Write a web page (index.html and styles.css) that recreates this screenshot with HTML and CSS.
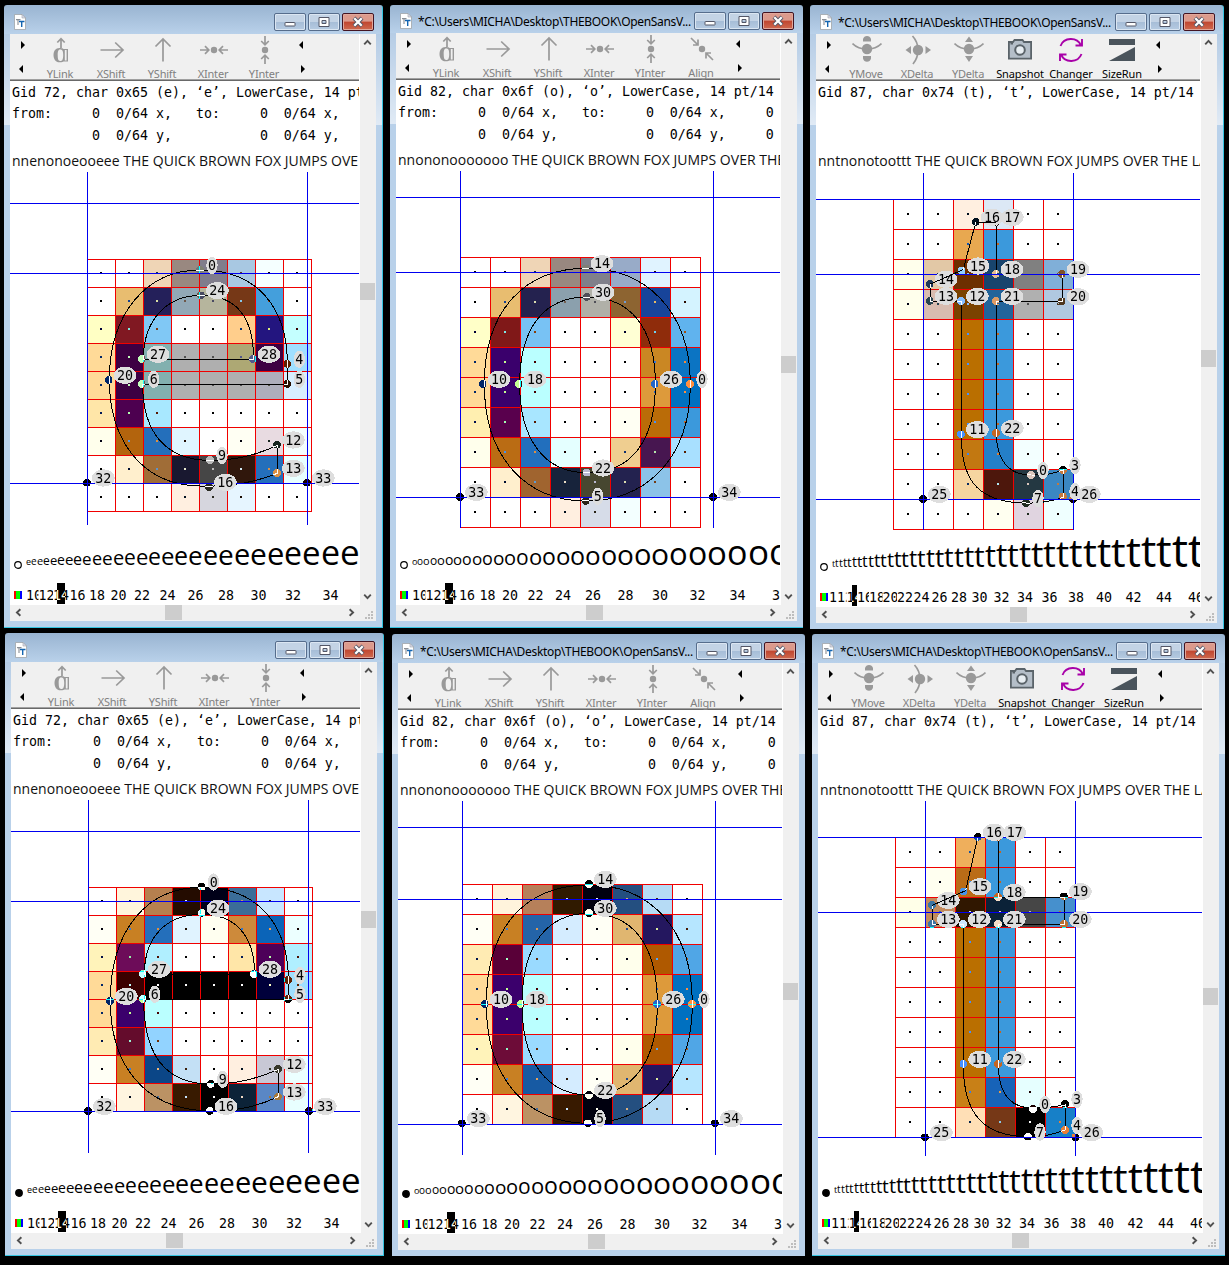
FILE: index.html
```html
<!DOCTYPE html>
<html lang="en">
<head>
<meta charset="utf-8">
<title>Glyph hinting windows</title>
<link rel="stylesheet" href="styles.css">
</head>
<body>
<svg class="defs" aria-hidden="true">
  <defs>
    <symbol id="i-ylink" viewBox="-15 -16 30 32">
      <path class="ln" d="M0-11.500V-2M-3.700-7.500L0-11.300L3.700-7.500"/>
      <path class="fl" fill-rule="evenodd" d="M-1.500-2C2-2 2.500-1 2.500-1H7V11.500H2.500C1 12.300-.5 12.300-1.500 12.300C-5.500 12.300-7.500 9-7.500 5S-5.500-2-1.500-2ZM-.8-.6C-3-.6-3.300 2-3.300 5S-3 11-.8 11C1 11 2.200 10 2.200 5S1 -.6-.8-.6ZM3.800 0V10.500H5.600V0Z"/>
    </symbol>
    <symbol id="i-xshift" viewBox="-15 -16 30 32"><path class="ln" d="M-11.500 0H11M3.200-7.500L11 0L3.200 7.500"/></symbol>
    <symbol id="i-yshift" viewBox="-15 -16 30 32"><path class="ln" d="M0 11.500V-11M-7.500-3.500L0-11L7.500-3.500"/></symbol>
    <symbol id="i-xinter" viewBox="-15 -16 30 32">
      <circle class="fl" r="3.200"/><path class="ln" d="M-14 0H-5.500M-9-3.800L-5.200 0L-9 3.800M14 0H5.500M9-3.800L5.200 0L9 3.800"/>
    </symbol>
    <symbol id="i-yinter" viewBox="-15 -16 30 32">
      <circle class="fl" r="3.200"/><path class="ln" d="M0-14V-5.500M-3.800-9L0-5.200L3.800-9M0 14V5.500M-3.800 9L0 5.200L3.800 9"/>
    </symbol>
    <symbol id="i-align" viewBox="-15 -16 30 32">
      <circle class="fl" r="3.200"/><path class="ln" d="M-11-11L-4-4M-9-4H-4V-9.500M11 11L4 4M9 4H4V9.500"/>
    </symbol>
    <symbol id="i-ymove" viewBox="-15 -16 30 32">
      <circle class="fl" cx="0" cy="-1" r="5.200"/><path class="ln" d="M-14.500-6.500Q-9-1 0-1Q9-1 14.500-6.500"/>
      <path class="fl" d="M-4-8.500V-11Q-3-14 0-14T4-11V-8.500ZM-4 6V8.500Q-3 11.800 0 11.800T4 8.500V6Z"/>
    </symbol>
    <symbol id="i-xdelta" viewBox="-15 -16 30 32">
      <circle class="fl" cx="0" cy="0" r="5.200"/><path class="ln" d="M-5.500-14Q0-8 0 0Q0 8-5 14"/>
      <path class="fl" d="M-7-4V4L-12.500 0ZM7.500-4V4L13 0Z"/>
    </symbol>
    <symbol id="i-ydelta" viewBox="-15 -16 30 32">
      <circle class="fl" cx="0" cy="-1" r="5.200"/><path class="ln" d="M-14.500-6.500Q-9-1 0-1Q9-1 14.500-6.500"/>
      <path class="fl" d="M-4-8L0-13.500L4-8ZM-4 6L0 12L4 6Z"/>
    </symbol>
    <symbol id="i-snapshot" viewBox="-15 -16 30 32">
      <path fill="#b4bec8" stroke="#5a6369" stroke-width="1.800" d="M-11.100-8H-7L-5.500-10H2.500L4-8H11.100V8.600H-11.100Z"/>
      <circle fill="#e8eef2" stroke="#5a6369" stroke-width="2" r="4.800"/><rect x="-9.500" y="-7" width="2.500" height="1.500" fill="#5a6369"/>
    </symbol>
    <symbol id="i-changer" viewBox="-15 -16 30 32">
      <path fill="none" stroke="#a800a8" stroke-width="1.900" d="M-10.500-4A11 10.500 0 0 1 10-4.500M4.500-4.500H11V-11M10.500 4A11 10.500 0 0 1-10 4.500M-4.500 4.500H-11V11"/>
    </symbol>
    <symbol id="i-sizerun" viewBox="-15 -16 30 32"><path fill="#4a545c" d="M-13-11H13V-5H-13ZM-13 11L13-3V11Z"/></symbol>
    <symbol id="i-doc" viewBox="0 0 12 16">
      <path fill="#fff" stroke="#a0a4a8" stroke-width=".8" d="M.5.500H8L11.500 4V15.500H.5Z"/><path fill="#dde" stroke="#a0a4a8" stroke-width=".6" d="M8 .5V4H11.500Z"/>
      <path fill="none" stroke="#8a8f96" stroke-width="1.100" d="M2 5.600H6.500M4 5.500V11"/><path fill="none" stroke="#1465b0" stroke-width="1.400" d="M5 7.500H10.500M7.700 7V13"/>
    </symbol>
    <symbol id="i-chevron" viewBox="-8 -8 16 16"><path fill="none" stroke="#505050" stroke-width="2" d="M-3.500 2L0-1.700L3.500 2"/></symbol>
  </defs>
</svg>
<main id="desktop" class="desktop"></main>
<script src="app.js"></script>
</body>
</html>
```
FILE: styles.css
```css
* { box-sizing: border-box; }
body { margin: 0; background: #000; overflow: hidden; }
.defs { position: absolute; width: 0; height: 0; }
.desktop { position: relative; width: 1229px; height: 1265px; background: #000; overflow: hidden; }

/* window frames */
.win {
  --title: 29px;
  position: absolute;
  display: flex;
  flex-direction: column;
  padding: 0 6px;
  border-radius: 3px 3px 0 0;
  background:
    linear-gradient(#99b4d1, #b9d1ea) 0 0 / 100% var(--title) no-repeat,
    linear-gradient(#b5cce5, #e0eaf5) 0 var(--title) / 100% 91px no-repeat,
    #b9d1ea;
}
.edge-right { box-shadow: inset -1px 0 #35c4e0; }
.edge-bottom { box-shadow: inset 0 -1px #35c4e0; }
.edge-right.edge-bottom { box-shadow: inset -1px -1px #35c4e0; }
.e-top { left: 4px; top: 5px; width: 379px; height: 623px; padding: 0 7px 7px 6px; }
.o-top { left: 390px; top: 5px; width: 413px; height: 623px; padding-bottom: 7px; --title: 28px; }
.t-top { left: 810px; top: 5px; width: 414px; height: 624px; padding: 0 7px 6px 6px; }
.e-bottom { left: 5px; top: 633px; width: 379px; height: 623px; padding: 0 7px 7px 6px; }
.o-bottom { left: 392px; top: 634px; width: 413px; height: 622px; padding-bottom: 6px; }
.t-bottom { left: 812px; top: 634px; width: 413px; height: 622px; padding-bottom: 7px; }

.titlebar { flex: none; display: flex; align-items: flex-end; height: var(--title); padding: 0 3px 3px 4px; }
.e-top .titlebar, .e-bottom .titlebar, .t-top .titlebar { padding-right: 2px; }
.titlebar .doc { flex: none; width: 12px; height: 16px; margin-bottom: 1px; }
.caption {
  flex: 1; min-width: 0; height: 18px; margin-left: 6px; padding-top: 1px; overflow: hidden; white-space: pre;
  font: 12px/17px "Noto Sans", "Open Sans", sans-serif; letter-spacing: -.33px; color: #000;
}
.buttons { display: flex; gap: 2px; }
.btn {
  width: 32px; height: 18px; display: flex; align-items: center; justify-content: center;
  border: 1px solid #566d8c; border-radius: 2px; box-shadow: inset 0 0 0 1px #dbe6f2;
  background: linear-gradient(#c3d3e5 50%, #a6bdd7 50%, #b6cbe2);
}
.btn.close { border-color: #431422; box-shadow: inset 0 0 0 1px #e0a89c; background: linear-gradient(#dc9a8c 45%, #c04630 50%, #cf6a50); }
.btn svg { width: 14px; height: 12px; }

.client { flex: 1; min-height: 0; display: flex; flex-direction: column; background: #fff; }
.upper { flex: 1; min-height: 0; display: flex; }
.pane { flex: 1; min-width: 0; margin-right: 1px; display: flex; flex-direction: column; overflow: hidden; }

/* toolbar */
.toolbar { flex: none; display: flex; height: 47px; background: #f0f0f0; border-bottom: 1px solid #696969; box-shadow: inset 0 -1px #a0a0a0; }
.tool { flex: none; width: 51px; display: flex; flex-direction: column; align-items: center; color: #808080; }
.tool svg { width: 30px; height: 32px; }
.tool span { font: 11px/14px "Noto Sans", "Open Sans", sans-serif; letter-spacing: -.2px; white-space: nowrap; position: relative; left: -.5px; top: .5px; }
.tool.on { color: #000; }
.tool.on span { left: .5px; letter-spacing: -.1px; }
.ln { fill: none; stroke: #999; stroke-width: 1.700; }
.fl { fill: #999; }
.pager { flex: none; width: 25px; display: flex; flex-direction: column; gap: 16px; padding: 7px 0 0 9px; }
.pager svg { width: 8px; height: 8px; }

/* text lines */
.info { margin: 0; height: 65px; padding: .5px 0 0 2px; font: 13.290px/21.500px "DejaVu Sans Mono", monospace; color: #000; }
.sample { height: 25px; padding: 4px 0 0 2px; font: 14px/21px "Open Sans", sans-serif; letter-spacing: .02px; white-space: nowrap; color: #111; }

/* glyph grid */
.plot { flex: 1; min-height: 0; width: 100%; display: block; isolation: isolate; shape-rendering: crispEdges; }
.plot .paper { fill: #fff; }
.plot .grid { stroke: #f00000; stroke-width: 3; fill: none; }
.plot .guide { stroke: #0000f0; stroke-width: 3; fill: none; }
.plot .outline { stroke: #000; stroke-width: 3; fill: none; }
.plot .invert { fill: #fff; mix-blend-mode: difference; }
.plot .tag { fill: #dedede; }
.plot text { font: 40px "DejaVu Sans Mono", monospace; text-anchor: middle; fill: #000; }

/* size run */
.run { flex: none; height: 76px; width: 100%; display: block; }
.run .glyph { font-family: "Open Sans", sans-serif; }
.run .num { font: 13.290px "DejaVu Sans Mono", monospace; text-anchor: middle; }
.run .marker { fill: #fff; stroke: #000; stroke-width: 1.200; }
.run .marker.full { fill: #000; }

/* scroll bars */
.vscroll { flex: none; width: 16px; background: #f0f0f0; display: flex; flex-direction: column; }
.hscroll { flex: none; height: 16px; background: #f0f0f0; display: flex; }
.track { flex: 1; }
.thumb { width: 15px; height: 17px; background: #cdcdcd; }
.hscroll .thumb { width: 17px; height: 15px; }
.chev { flex: none; width: 15px; height: 17px; }
.chev.down { transform: rotate(180deg); }
.hscroll .chev { width: 17px; height: 15px; }
.chev.left { transform: rotate(-90deg); }
.chev.right { transform: rotate(90deg); }
.grip { width: 16px; height: 16px; fill: #bdbdbd; }
```
FILE: app.js
```js
// Plot coordinates are in thirds of a pixel.
const TOOLS_LINK = [['ylink', 'YLink'], ['xshift', 'XShift'], ['yshift', 'YShift'], ['xinter', 'XInter'], ['yinter', 'YInter']];
const TOOLS_ALIGN = [...TOOLS_LINK, ['align', 'Align']];
const TOOLS_DELTA = [['ymove', 'YMove'], ['xdelta', 'XDelta'], ['ydelta', 'YDelta'], ['snapshot', 'Snapshot', 1], ['changer', 'Changer', 1], ['sizerun', 'SizeRun', 1]];
const PATH = '*C:\\Users\\MICHA\\Desktop\\THEBOOK\\OpenSansV...';
const COORDS = 'from:     0  0/64 x,   to:     0  0/64 x,     0\n          0  0/64 y,           0  0/64 y,     0';
const STEM = '- - ba6f00 3b99dc - -';

const windows = [
  {
    cls: 'e-top edge-right edge-bottom', tools: TOOLS_LINK, title: '', v: 232, h: 138,
    gid: 'Gid 72, char 0x65 (e), ‘e’, LowerCase, 14 pt/14', coords: COORDS,
    sample: 'nnenonoeooeee THE QUICK BROWN FOX JUMPS OVE', glyph: 'e', adv: .561,
    box: [30, -27, 1047, 1074], grid: [262.5, 238.5, 84], vx: [262.5, 922.5], vy: [-24, 1035], hy: [70.5, 280.5, 910.5],
    cells: `- - efd5b6 998880 807d8c a8c8e2 f5ffff -
      - e8bd70 24205a 92a8b6 b6b59d 763817 449fdc -
      ffffc4 801822 80c8f5 - - ffce8c 23157f c4ffff
      ffda98 3d0043 82b0af afafaf afafaf ada874 3d0043 a0dfff
      ffda98 3d0043 82b0af afafaf afafaf afafaf aeaebb d8efff
      ffe6a8 4d0050 a8e8ff - - - - -
      ffffec b3640d 246fbb e0f5ff - fffff3 e8dbe1 f5ffff
      - ffefcd a06d37 191830 464646 30170c 246fbb e8ffff
      - - - ffefe0 d6d6de e6f5ff - -`,
    path: 'M600 270C440 270 328 400 328 600C328 760 410 915 600 918C700 922 770 905 832 880V796C770 825 700 842 630 841C500 841 428 760 428 613H862V552C862 380 770 270 600 270ZM761 538C761 400 700 346 603 346C500 346 430 420 430 538Z',
    pts: [[0, 600, 270], [24, 603, 346], [27, 425, 537], [28, 758, 537], [4, 862, 552], [5, 862, 612], [20, 326, 600], [6, 425, 612], [12, 831, 794], [13, 831, 879], [9, 630, 840], [16, 627, 921], [32, 261, 908], [33, 921, 908]]
  },
  {
    cls: 'o-top edge-bottom', tools: TOOLS_ALIGN, title: PATH, v: 306, h: 173,
    gid: 'Gid 82, char 0x6f (o), ‘o’, LowerCase, 14 pt/14', coords: COORDS,
    sample: 'nnononooooooo THE QUICK BROWN FOX JUMPS OVER THE', glyph: 'o', adv: .603,
    box: [33, -30, 1152, 1077], grid: [226.5, 232.5, 90], vx: [226.5, 985.5], vy: [-27, 1044], hy: [52.5, 277.5, 952.5],
    cells: `- - efd5b6 998880 80808a 98abc8 e0f3ff -
      - e8bd70 24224f 8ba0ad b0b0a8 8d6431 17449a d4f3ff
      ffffc8 801818 78c2f4 - - ffffd4 8f2c0b 60b3ee
      ffda98 3a006c baffff - - - ca8723 0b74c3
      ffda98 3a006c baffff - - - dd9a3b 0070c0
      ffefb0 59004d a8e6ff - - fffff3 ba6c08 3b99dc
      ffffec ba6c14 226fbd e4ffff - efce90 471650 a8e0ff
      - ffefcd a0642f 17233b 474730 23224f 8cc3e8 -
      - - - ffefe0 d6dce8 f3ffff - -`,
    path: 'M603 265C425 265 298 385 298 612C298 840 430 963 602 963C770 963 916 850 916 612C916 390 780 265 603 265ZM605 351C480 351 404 440 404 612C404 780 480 878 605 878C735 878 811 790 811 612C811 440 735 351 605 351Z',
    pts: [[14, 602, 265], [30, 605, 351], [10, 293, 612], [18, 401, 612], [26, 809, 612], [0, 915, 612], [22, 605, 878], [5, 602, 963], [33, 225, 951], [34, 984, 951]]
  },
  {
    cls: 't-top edge-right', tools: TOOLS_DELTA, title: PATH, v: 299, h: 177,
    gid: 'Gid 87, char 0x74 (t), ‘t’, LowerCase, 14 pt/14', coords: '',
    sample: 'nntnonotoottt THE QUICK BROWN FOX JUMPS OVER THE LA', glyph: 't', adv: .3555,
    box: [33, -27, 1152, 1080], grid: [265.5, 58.5, 90], vx: [355.5, 805.5], vy: [-21, 1050], hy: [58.5, 283.5, 958.5],
    cells: `- - ffefe0 dce8f5 - -
      - - e8a850 3b99dc - -
      ffffec e2c8a6 6d2f00 18446d 808080 80afd8
      ffffec d8bcb0 7a4200 22649a b0b0b0 b0c8e0
      ${STEM}
      ${STEM}
      ${STEM}
      ${STEM}
      - - c27811 247fc8 f3ffff -
      - - f6d5a0 4d170c 243842 3b87c2
      - - - fffff0 e0d4e0 efffff`,
    path: 'M512 127L475 268Q440 285 376 312V364H469V763C469 880 500 968 663 969C710 971 745 962 775 952V870C740 882 720 886 678 885C610 885 574 840 574 759V364H772V283H574V127Z',
    over: 'M475 268Q440 285 376 312M512 127H574',
    pts: [[16, 512, 126], [17, 573, 126], [15, 470, 272], [18, 572, 282], [14, 374, 312], [13, 374, 363], [12, 468, 363], [21, 572, 363], [20, 770, 364], [19, 770, 282], [11, 468, 763], [22, 573, 759], [0, 678, 885], [3, 774, 870], [4, 774, 949], [7, 663, 969], [25, 354, 957], [26, 804, 957]]
  },
  {
    cls: 'e-bottom edge-right edge-bottom', tools: TOOLS_LINK, title: '', v: 232, h: 138, full: true,
    gid: 'Gid 72, char 0x65 (e), ‘e’, LowerCase, 14 pt/14', coords: COORDS,
    sample: 'nnenonoeooeee THE QUICK BROWN FOX JUMPS OVE', glyph: 'e', adv: .561,
    box: [33, 57, 1047, 1074], grid: [265.5, 322.5, 84], vx: [265.5, 925.5], vy: [60, 1119], hy: [154.5, 364.5, 994.5],
    cells: `- fff5dc b6804f 240c00 000018 3b6d98 c8e6ff -
      fffff5 c88023 246fbb e0f3ff fffff0 cd8a3b 0b64b8 ecffff
      fff3ba 6d0c59 b0efff - - ffe6a8 4d0059 b0efff
      ffda98 3b0000 000000 000000 000000 000000 00003b a0dfff
      ffda98 3b006c baffff - - - - -
      ffebb3 640c2c 92d3ff - - - - -
      fffff5 c88023 0b4687 c3e0f5 - ffefe0 c8c8d5 ecffff
      - fff5e0 bb9264 381a00 000000 0c2338 5a87c5 e8ffff`,
    path: 'M605 322C440 322 331 450 331 663C331 840 420 990 629 993C720 992 770 980 835 950V868C770 897 700 913 632 912C500 912 431 830 431 658H865V600C865 430 770 322 605 322ZM764 583C764 460 700 403 605 403C500 403 433 470 433 583Z',
    pts: [[0, 605, 320], [24, 605, 399], [27, 428, 582], [28, 761, 582], [4, 864, 600], [5, 864, 657], [20, 330, 663], [6, 428, 657], [12, 834, 867], [13, 834, 950], [9, 632, 912], [16, 629, 993], [32, 264, 993], [33, 927, 993]]
  },
  {
    cls: 'o-bottom', tools: TOOLS_ALIGN, title: PATH, v: 303, h: 173, full: true,
    gid: 'Gid 82, char 0x6f (o), ‘o’, LowerCase, 14 pt/14', coords: COORDS,
    sample: 'nnononooooooo THE QUICK BROWN FOX JUMPS OVER THE', glyph: 'o', adv: .603,
    box: [39, 60, 1152, 1074], grid: [232.5, 313.5, 90], vx: [232.5, 991.5], vy: [63, 1125], hy: [142.5, 358.5, 1033.5],
    cells: `- fff3dc b6805a 301a00 00000f 244f80 b6dbf5 -
      fffff5 c88023 2464a8 d4ecff fffff5 e0b670 24175f b6e6ff
      ffebb3 590038 9adaff - - ffffec af5900 50a6e6
      ffda98 3b006c baffff - - - dd9a3b 0070c0
      ffda98 3b006c baffff - - - dd9a3b 0070c0
      fff3ba 6d0c38 9adaff - - ffffec af5900 50a6e6
      fffff5 c88023 175aa3 d4ecff fffff5 e0b670 24175f b6e6ff
      - fff5e0 bb9264 381a00 00000f 244f80 b6dbf5 -`,
    path: 'M612 315C430 315 304 430 304 672C304 900 430 1030 609 1030C780 1030 922 900 922 672C922 440 790 315 612 315ZM612 400C490 400 411 490 411 672C411 850 490 945 612 945C740 945 817 850 817 672C817 490 740 400 612 400Z',
    pts: [[14, 612, 312], [30, 612, 399], [10, 299, 672], [18, 407, 672], [26, 816, 672], [0, 921, 672], [22, 612, 945], [5, 609, 1030], [33, 231, 1030], [34, 990, 1030]]
  },
  {
    cls: 't-bottom edge-bottom', tools: TOOLS_DELTA, title: PATH, v: 308, h: 177, full: true,
    gid: 'Gid 87, char 0x74 (t), ‘t’, LowerCase, 14 pt/14', coords: '',
    sample: 'nntnonotoottt THE QUICK BROWN FOX JUMPS OVER THE LA', glyph: 't', adv: .3555,
    box: [39, 60, 1152, 1071], grid: [271.5, 172.5, 90], vx: [361.5, 811.5], vy: [63, 1128], hy: [172.5, 397.5, 1072.5],
    cells: `- - efaf5c 3b99dc - -
      - fffff0 ba6c17 3b99dc - -
      ffffe8 c38a5c 301700 0b2238 464646 4690cd
      ${STEM}
      ${STEM}
      ${STEM}
      ${STEM}
      ${STEM}
      - - c88017 1763b8 e6ffff -
      - - ffdfb6 763817 000000 1780c8`,
    path: 'M518 173L482 332Q445 348 382 376V433H475V852C475 970 510 1070 669 1070C715 1071 750 1062 781 1050V975C750 981 720 984 684 984C615 984 580 940 580 852V433H778V352H580V173Z',
    over: 'M482 332Q445 348 382 376',
    pts: [[16, 518, 171], [17, 580, 171], [15, 476, 334], [18, 579, 351], [14, 381, 375], [13, 381, 432], [12, 474, 432], [21, 579, 432], [20, 777, 432], [19, 777, 349], [11, 475, 852], [22, 579, 852], [0, 684, 987], [3, 780, 972], [4, 780, 1050], [7, 669, 1070], [25, 360, 1072], [26, 811, 1072]]
  }
];

function plot(w) {
  const [gx, gy, p] = w.grid;
  const rows = w.cells.trim().split('\n').map(r => r.trim().split(' '));
  const cols = rows[0].length, right = gx + cols * p, bottom = gy + rows.length * p;
  let cells = '', dots = '', grid = '', guides = '', tags = '';
  rows.forEach((row, j) => row.forEach((c, i) => {
    if (c !== '-') cells += `<rect x="${gx + i * p}" y="${gy + j * p}" width="${p}" height="${p}" fill="#${c}"/>`;
    dots += `<rect x="${gx + i * p + p / 2 - 4.5}" y="${gy + j * p + p / 2 - 4.5}" width="6" height="6"/>`;
  }));
  for (let i = 0; i <= cols; i++) grid += `M${gx + i * p} ${gy - 1.5}V${bottom + 1.5}`;
  for (let j = 0; j <= rows.length; j++) grid += `M${gx} ${gy + j * p}H${right}`;
  w.vx.forEach(x => guides += `M${x} ${w.vy[0]}V${w.vy[1]}`);
  w.hy.forEach(y => guides += `M${w.box[0]} ${y}H${w.box[0] + w.box[2]}`);
  const marks = w.pts.map(([, x, y]) => `<circle cx="${x}" cy="${y}" r="11.500"/>`).join('');
  w.pts.forEach(([n, x, y]) => {
    const two = n > 9, cx = x + (two ? 49 : 36), cy = y - 14;
    tags += `<ellipse class="tag" cx="${cx}" cy="${cy}" rx="${two ? 34 : 17}" ry="26"/><text x="${cx}" y="${cy + 14}">${n}</text>`;
  });
  return `<svg class="plot" viewBox="${w.box.join(' ')}" preserveAspectRatio="xMinYMin slice">
    <rect class="paper" x="${w.box[0]}" y="${w.box[1]}" width="${w.box[2]}" height="${w.box[3] + 30}"/>
    ${cells}<path class="grid" d="${grid}"/><g class="invert">${dots}</g><path class="outline" d="${w.path}"/>
    <g class="invert">${marks}</g><path class="guide" d="${guides}"/>${tags}<path class="outline" d="${w.over || ''}"/></svg>`;
}

function sizeRun(w) {
  const width = w.box[2] / 3;
  let x = 16, glyphs = '', nums = '', mark = '';
  for (let s = 9; x < width; s++) {
    const a = Math.round(w.adv * s), c = x + a / 2;
    glyphs += `<text class="glyph" x="${x}" y="36" font-size="${s}">${w.glyph}</text>`;
    if (s % 2 === 0) nums += `<rect x="${c - 8}" y="60" width="16" height="14" fill="#fff"/><text class="num" x="${c}" y="71">${s}</text>`;
    if (s === 14) {
      mark = `<clipPath id="${w.cls.split(' ')[0]}"><rect x="${x}" y="54" width="${a}" height="21"/></clipPath>`;
      nums += `<rect x="${x}" y="54" width="${a}" height="21"/><g clip-path="url(#${w.cls.split(' ')[0]})"><text class="num" x="${c}" y="71" fill="#ffe">14</text></g>`;
    }
    x += a;
  }
  return `<svg class="run">${mark}<circle class="marker${w.full ? ' full' : ''}" cx="8" cy="36" r="3.300"/>${glyphs}${nums}
    <rect x="4" y="62" width="2" height="8" fill="#f00"/><rect x="6" y="62" width="4" height="8" fill="#0f0"/><rect x="10" y="62" width="2" height="8" fill="#00f"/></svg>`;
}

const arrow = (d) => `<svg viewBox="0 0 8 8"><path d="${d}"/></svg>`;
const toRight = arrow('M2 0L6 4L2 8Z'), toLeft = arrow('M4 0L0 4L4 8Z');

function windowView(w) {
  const tools = w.tools.map(([id, name, on]) => `<div class="tool${on ? ' on' : ''}"><svg><use href="#i-${id}"/></svg><span>${name}</span></div>`).join('');
  const chev = dir => `<svg class="chev ${dir}"><use href="#i-chevron"/></svg>`;
  return `<section class="win ${w.cls}">
    <header class="titlebar"><svg class="doc"><use href="#i-doc"/></svg><div class="caption">${w.title}</div>
      <div class="buttons">
        <div class="btn"><svg viewBox="0 0 14 12"><rect x="2" y="6.500" width="10" height="3.500" rx=".5" fill="#fff" stroke="#535666"/></svg></div>
        <div class="btn"><svg viewBox="0 0 14 12"><path fill="#fff" fill-rule="evenodd" stroke="#535666" d="M2 1.500H12V10.500H2ZM5 4.500V7.500H9V4.500Z"/></svg></div>
        <div class="btn close"><svg viewBox="0 0 14 12"><path d="M3 2L11 10M11 2L3 10" stroke="#535666" stroke-width="4"/><path d="M3.300 2.300L10.700 9.700M10.700 2.300L3.300 9.700" stroke="#fff" stroke-width="2.300"/></svg></div>
      </div></header>
    <div class="client"><div class="upper"><div class="pane">
      <div class="toolbar"><div class="pager">${toRight}${toLeft}</div>${tools}<div class="pager">${toLeft}${toRight}</div></div>
      <pre class="info">${w.gid}\n${w.coords}</pre><div class="sample">${w.sample}</div>${plot(w)}${sizeRun(w)}</div>
      <div class="vscroll">${chev('up')}<div class="track"><div class="thumb" style="margin-top:${w.v}px"></div></div>${chev('down')}</div></div>
      <div class="hscroll">${chev('left')}<div class="track"><div class="thumb" style="margin-left:${w.h}px"></div></div>${chev('right')}
        <svg class="grip" viewBox="0 0 16 16"><path d="M11 6h2v2h-2zM8 9h2v2H8zM11 9h2v2h-2zM5 12h2v2H5zM8 12h2v2H8zM11 12h2v2h-2z"/></svg></div></div>
  </section>`;
}

document.getElementById('desktop').innerHTML = windows.map(windowView).join('');
```
